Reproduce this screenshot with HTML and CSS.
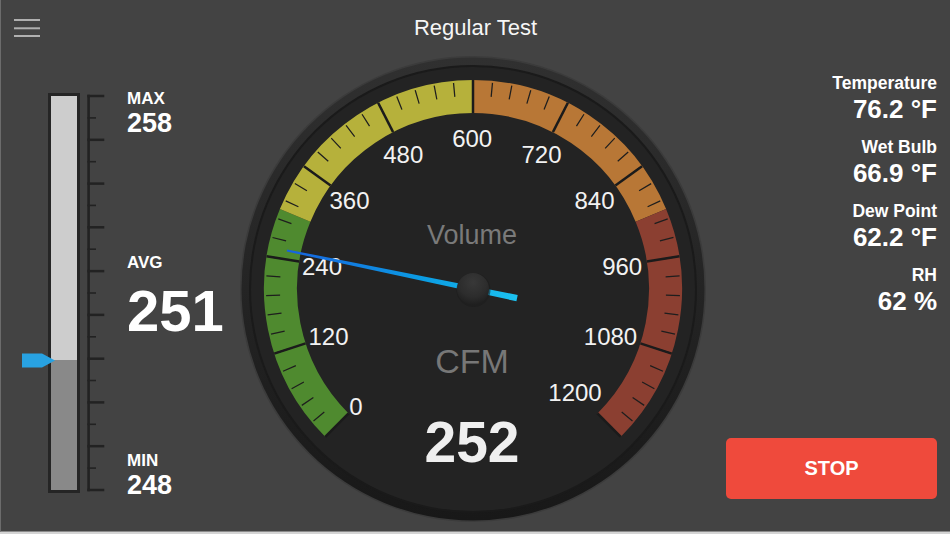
FILE: index.html
```html
<!DOCTYPE html>
<html lang="en">
<head>
<meta charset="utf-8">
<title>Regular Test</title>
<link rel="stylesheet" href="styles.css">
</head>
<body>
<div class="app">
  <header class="topbar">
    <button class="menu" aria-label="Menu">
      <svg viewBox="0 0 26 18" width="26" height="18"><g stroke="#b0b0b0" stroke-width="2"><line x1="0" y1="1" x2="26" y2="1"/><line x1="0" y1="9.3" x2="26" y2="9.3"/><line x1="0" y1="17" x2="26" y2="17"/></g></svg>
    </button>
    <h1 class="title">Regular Test</h1>
    <span></span>
  </header>
  <main class="content">
    <section class="level">
      <svg class="level-bar" viewBox="0 0 88 406" width="88" height="406">
        <rect x="28" y="3" width="32" height="400" fill="#252525"/>
        <rect x="31" y="6" width="26" height="264" fill="#cdcdcd"/>
        <rect x="31" y="270" width="26" height="130" fill="#898989"/>
        <g stroke="#222">
          <line x1="68.6" y1="4.8" x2="68.6" y2="401.3" stroke-width="2.6"/>
          <g stroke-width="2.5">
            <line x1="67.3" x2="84.3" y1="6" y2="6"/>
            <line x1="67.3" x2="84.3" y1="49.8" y2="49.8"/>
            <line x1="67.3" x2="84.3" y1="93.6" y2="93.6"/>
            <line x1="67.3" x2="84.3" y1="137.3" y2="137.3"/>
            <line x1="67.3" x2="84.3" y1="181.1" y2="181.1"/>
            <line x1="67.3" x2="84.3" y1="224.9" y2="224.9"/>
            <line x1="67.3" x2="84.3" y1="268.7" y2="268.7"/>
            <line x1="67.3" x2="84.3" y1="312.4" y2="312.4"/>
            <line x1="67.3" x2="84.3" y1="356.2" y2="356.2"/>
            <line x1="67.3" x2="84.3" y1="400" y2="400"/>
          </g>
          <g stroke-width="1.6">
            <line x1="67.3" x2="76" y1="27.9" y2="27.9"/>
            <line x1="67.3" x2="76" y1="71.7" y2="71.7"/>
            <line x1="67.3" x2="76" y1="115.4" y2="115.4"/>
            <line x1="67.3" x2="76" y1="159.2" y2="159.2"/>
            <line x1="67.3" x2="76" y1="203" y2="203"/>
            <line x1="67.3" x2="76" y1="246.8" y2="246.8"/>
            <line x1="67.3" x2="76" y1="290.5" y2="290.5"/>
            <line x1="67.3" x2="76" y1="334.3" y2="334.3"/>
            <line x1="67.3" x2="76" y1="378.1" y2="378.1"/>
          </g>
        </g>
        <polygon points="2,263.5 22,263.5 35,270.5 22,277.5 2,277.5" fill="#28a2e2"/>
      </svg>
      <div class="stats">
        <div class="stat">
          <div class="stat-label">MAX</div>
          <div class="stat-value">258</div>
        </div>
        <div class="stat stat-avg">
          <div class="stat-label">AVG</div>
          <div class="stat-value">251</div>
        </div>
        <div class="stat stat-min">
          <div class="stat-label">MIN</div>
          <div class="stat-value">248</div>
        </div>
      </div>
    </section>

    <section class="gauge">
      <svg viewBox="0 0 466 466" width="466" height="466">
        <defs>
          <linearGradient id="rim" x1="0" y1="0" x2="0" y2="1">
            <stop offset="0" stop-color="#303030"/>
            <stop offset="1" stop-color="#181818"/>
          </linearGradient>
          <linearGradient id="needle" gradientUnits="userSpaceOnUse" x1="233" y1="43" x2="233" y2="278">
            <stop offset="0" stop-color="#1762de"/>
            <stop offset="0.6" stop-color="#0b9de3"/>
            <stop offset="1" stop-color="#1cc2f0"/>
          </linearGradient>
          <radialGradient id="hub" cx="0.5" cy="0.3" r="0.75">
            <stop offset="0" stop-color="#383838"/>
            <stop offset="0.6" stop-color="#2c2c2c"/>
            <stop offset="1" stop-color="#1c1c1c"/>
          </radialGradient>
        </defs>
        <circle cx="233" cy="233" r="233" fill="#3b3b3b"/>
        <circle cx="233" cy="233" r="231.5" fill="url(#rim)"/>
        <circle cx="233" cy="233" r="224" fill="#1a1a1a"/>
        <circle cx="233" cy="233" r="222" fill="#232323"/>

        <g fill="none" stroke-width="33">
          <path d="M 96.88 369.12 A 192.5 192.5 0 0 1 55.15 159.33" stroke="#4f8a2f"/>
          <path d="M 55.15 159.33 A 192.5 192.5 0 0 1 233 40.5" stroke="#b6b13b"/>
          <path d="M 233 40.5 A 192.5 192.5 0 0 1 410.85 159.33" stroke="#b87736"/>
          <path d="M 410.85 159.33 A 192.5 192.5 0 0 1 369.12 369.12" stroke="#8b3f31"/>
        </g>
        <path d="M 91.58 374.42 A 200 200 0 1 1 374.42 374.42" pathLength="1200" fill="none" stroke="#1e1e1e" stroke-width="14" stroke-dasharray="1.6 22.4" stroke-dashoffset="0.8"/>
        <g stroke="#1b1b1b" stroke-width="2.5">
          <line x1="233" y1="24" x2="233" y2="57" transform="rotate(-135 233 233)"/>
          <line x1="233" y1="24" x2="233" y2="57" transform="rotate(-108 233 233)"/>
          <line x1="233" y1="24" x2="233" y2="57" transform="rotate(-81 233 233)"/>
          <line x1="233" y1="24" x2="233" y2="57" transform="rotate(-54 233 233)"/>
          <line x1="233" y1="24" x2="233" y2="57" transform="rotate(-27 233 233)"/>
          <line x1="233" y1="24" x2="233" y2="57"/>
          <line x1="233" y1="24" x2="233" y2="57" transform="rotate(27 233 233)"/>
          <line x1="233" y1="24" x2="233" y2="57" transform="rotate(54 233 233)"/>
          <line x1="233" y1="24" x2="233" y2="57" transform="rotate(81 233 233)"/>
          <line x1="233" y1="24" x2="233" y2="57" transform="rotate(108 233 233)"/>
          <line x1="233" y1="24" x2="233" y2="57" transform="rotate(135 233 233)"/>
        </g>

        <g class="scale-num" text-anchor="middle">
          <text x="116" y="359">0</text>
          <text x="88.5" y="289">120</text>
          <text x="82" y="219">240</text>
          <text x="109.5" y="153.3">360</text>
          <text x="163.3" y="107.3">480</text>
          <text x="232.2" y="90.7">600</text>
          <text x="301.5" y="107.3">720</text>
          <text x="354.5" y="153.3">840</text>
          <text x="382.2" y="219">960</text>
          <text x="370.5" y="289">1080</text>
          <text x="335" y="344.7">1200</text>
        </g>

        <text class="gauge-title" x="232" y="188.3" text-anchor="middle">Volume</text>
        <text class="gauge-unit" x="232" y="317.3" text-anchor="middle">CFM</text>
        <text class="gauge-value" x="232" y="405.7" text-anchor="middle">252</text>

        <polygon points="231.9,43 234.1,43 236.2,278 229.8,278" fill="url(#needle)" transform="rotate(-78.3 233 233)"/>
        <circle cx="233.5" cy="234" r="17" fill="#1c1c1c" opacity="0.6"/>
        <circle cx="233" cy="233" r="16" fill="url(#hub)"/>
      </svg>
    </section>

    <aside class="side">
      <div class="reading">
        <div class="reading-label">Temperature</div>
        <div class="reading-value">76.2 °F</div>
      </div>
      <div class="reading">
        <div class="reading-label">Wet Bulb</div>
        <div class="reading-value">66.9 °F</div>
      </div>
      <div class="reading">
        <div class="reading-label">Dew Point</div>
        <div class="reading-value">62.2 °F</div>
      </div>
      <div class="reading">
        <div class="reading-label">RH</div>
        <div class="reading-value">62 %</div>
      </div>
      <button class="stop">STOP</button>
    </aside>
  </main>
</div>
</body>
</html>
```

FILE: styles.css
```css
* {
  box-sizing: border-box;
  margin: 0;
  padding: 0;
}

html, body {
  width: 950px;
  height: 534px;
  overflow: hidden;
}

body {
  background: #d4d4d4;
  font-family: "Liberation Sans", Arial, Helvetica, sans-serif;
  color: #ffffff;
}

.app {
  height: 532px;
  background: #434343;
  border-left: 1px solid #6c6c6c;
  border-bottom: 1px solid #8a8a8a;
  display: flex;
  flex-direction: column;
}

.topbar {
  height: 56px;
  flex: none;
  display: grid;
  grid-template-columns: 1fr auto 1fr;
  align-items: center;
}

.menu {
  display: block;
  width: 26px;
  height: 18px;
  margin-left: 13px;
  background: none;
  border: 0;
}

.menu svg {
  display: block;
}

.title {
  font-size: 22px;
  font-weight: normal;
  line-height: 56px;
  color: #f6f6f6;
}

.content {
  flex: 1;
  min-height: 0;
  display: flex;
}

.level {
  width: 239px;
  flex: none;
  display: flex;
  align-items: flex-start;
  padding: 34px 0 0 19px;
}

.level-bar {
  display: block;
  flex: none;
}

.stats {
  margin-left: 19px;
  display: flex;
  flex-direction: column;
}

.stat-label {
  font-size: 17px;
  line-height: 17px;
  font-weight: bold;
}

.stat-value {
  font-size: 27px;
  line-height: 27px;
  font-weight: bold;
  margin-top: 3px;
}

.stat-avg {
  margin-top: 117px;
}

.stat-avg .stat-value {
  font-size: 58px;
  line-height: 58px;
  margin-top: 11px;
}

.stat-min {
  margin-top: 112px;
}

.gauge {
  width: 466px;
  height: 466px;
  flex: none;
}

.gauge svg {
  display: block;
}

.scale-num {
  font-family: "Liberation Sans", Arial, sans-serif;
  font-size: 24px;
  fill: #f2f2f2;
}

.gauge-title {
  font-family: "Liberation Sans", Arial, sans-serif;
  font-size: 27px;
  fill: #7a7a7a;
}

.gauge-unit {
  font-family: "Liberation Sans", Arial, sans-serif;
  font-size: 34px;
  fill: #777777;
}

.gauge-value {
  font-family: "Liberation Sans", Arial, sans-serif;
  font-size: 57px;
  font-weight: bold;
  fill: #efefef;
}

.side {
  flex: 1;
  display: flex;
  flex-direction: column;
  align-items: flex-end;
  text-align: right;
  padding: 18px 13px 32px 0;
}

.reading + .reading {
  margin-top: 16px;
}

.reading-label {
  font-size: 17.5px;
  line-height: 18px;
  font-weight: bold;
}

.reading-value {
  font-size: 26px;
  line-height: 26px;
  font-weight: bold;
  margin-top: 4px;
}

.stop {
  margin-top: auto;
  width: 211px;
  height: 61px;
  border: 0;
  border-radius: 5px;
  background: #ef4a3c;
  color: #ffffff;
  font-family: "Liberation Sans", Arial, sans-serif;
  font-size: 20px;
  font-weight: bold;
}
```
